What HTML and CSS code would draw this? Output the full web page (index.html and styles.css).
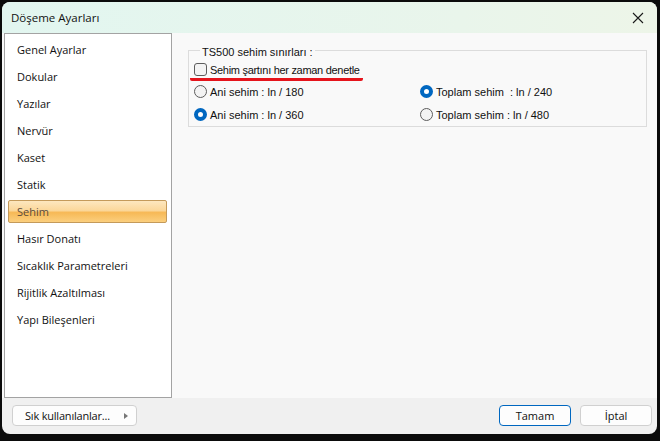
FILE: index.html
```html
<!DOCTYPE html>
<html lang="tr">
<head>
<meta charset="utf-8">
<title>Döşeme Ayarları</title>
<link rel="stylesheet" href="styles.css">
</head>
<body>
<div class="window">
  <div class="titlebar">
    <span class="title">Döşeme Ayarları</span>
    <svg class="close" width="12" height="12" viewBox="0 0 12 12"><path d="M1 1 L11 11 M11 1 L1 11" stroke="#1a1a1a" stroke-width="1.1" fill="none"/></svg>
  </div>
  <div class="main">
    <ul class="nav">
      <li class="nav-item">Genel Ayarlar</li>
      <li class="nav-item">Dokular</li>
      <li class="nav-item">Yazılar</li>
      <li class="nav-item">Nervür</li>
      <li class="nav-item">Kaset</li>
      <li class="nav-item">Statik</li>
      <li class="nav-item selected">Sehim</li>
      <li class="nav-item">Hasır Donatı</li>
      <li class="nav-item">Sıcaklık Parametreleri</li>
      <li class="nav-item">Rijitlik Azaltılması</li>
      <li class="nav-item">Yapı Bileşenleri</li>
    </ul>
    <div class="panel">
      <fieldset class="group">
        <legend class="legend">TS500 sehim sınırları :</legend>
        <div class="check-row">
          <span class="checkbox"></span>
          <span class="label check-label">Sehim şartını her zaman denetle</span>
        </div>
        <div class="radio-grid">
          <div class="opt"><span class="radio"></span><span class="label">Ani sehim : ln / 180</span></div>
          <div class="opt"><span class="radio on"></span><span class="label">Toplam sehim &nbsp;: ln / 240</span></div>
          <div class="opt"><span class="radio on"></span><span class="label">Ani sehim : ln / 360</span></div>
          <div class="opt"><span class="radio"></span><span class="label">Toplam sehim : ln / 480</span></div>
        </div>
      </fieldset>
    </div>
  </div>
  <div class="footer">
    <button class="btn fav"><span>Sık kullanılanlar...</span><span class="tri"></span></button>
    <div class="actions">
      <button class="btn primary">Tamam</button>
      <button class="btn">İptal</button>
    </div>
  </div>
</div>
</body>
</html>
```
FILE: styles.css
```css
* { box-sizing: border-box; }
html, body { margin: 0; padding: 0; }
body {
  background: #0b0b0b;
  width: 660px;
  height: 441px;
  overflow: hidden;
  font-family: "Open Sans", "Noto Sans", sans-serif;
}
.window {
  margin: 2px 0 0 2px;
  width: 655px;
  height: 432px;
  border-radius: 8px;
  overflow: hidden;
  background: #f0f0f0;
  display: flex;
  flex-direction: column;
}
.titlebar {
  height: 31px;
  flex: none;
  display: flex;
  align-items: center;
  justify-content: space-between;
  padding: 0 13px 0 9px;
  background: linear-gradient(to right, #e2f6f0, #e9f5eb 70%, #edf5e8);
}
.title {
  font-size: 11.5px;
  color: #111;
}
.close { display: block; }
.main {
  flex: none;
  height: 365px;
  display: flex;
  background: #f9f9f9;
}
.nav {
  list-style: none;
  margin: 0 0 0 2px;
  padding: 4px 0 0 0;
  width: 168px;
  background: #ffffff;
  border: 1px solid #a3a3a3;
}
.nav-item {
  height: 23px;
  margin: 0 4px 4px 3px;
  padding-left: 8px;
  line-height: 22px;
  font-size: 11px;
  color: #111;
  white-space: nowrap;
  border: 1px solid transparent;
}
.nav-item.selected {
  border-color: #c49a5a;
  border-radius: 2px;
  color: #5a4a3a;
  background: linear-gradient(to bottom, #fde7bf 0%, #fbd79a 45%, #f7b956 55%, #fbcf7e 100%);
}
.panel {
  flex: 1;
  padding: 10px 10px 0 16px;
}
.group {
  margin: 0;
  padding: 0 0 4px 5px;
  border: 1px solid #dcdcdc;
  height: 84px;
  font-family: "Liberation Sans", Arial, sans-serif;
  font-size: 11px;
  color: #111;
}
.legend {
  margin-left: 6px;
  padding: 3px 2px 0 2px;
  font-size: 11px;
}
.label { white-space: nowrap; }
.check-label { letter-spacing: -0.3px; }
.check-row {
  display: flex;
  align-items: center;
  height: 20px;
  margin-top: 3px;
  width: 173px;
  margin-left: -4px;
  padding-left: 4px;
  border-bottom: 3px solid #e5141c;
  border-radius: 0 0 2px 2px;
}
.checkbox {
  flex: none;
  width: 13px;
  height: 13px;
  border: 1px solid #5d5d5d;
  border-radius: 3px;
  background: #f3f3f3;
  margin-right: 3px;
}
.radio-grid {
  display: grid;
  grid-template-columns: 226px 1fr;
  grid-auto-rows: 23px;
  margin-top: -1px;
}
.opt {
  display: flex;
  align-items: center;
}
.radio {
  flex: none;
  width: 13px;
  height: 13px;
  border-radius: 50%;
  border: 1px solid #5d5d5d;
  background: #f3f3f3;
  margin-right: 3px;
}
.radio.on {
  border: 4px solid #0067c0;
  background: #ffffff;
}
.footer {
  flex: 1;
  display: flex;
  align-items: center;
  justify-content: space-between;
  padding: 0 5px 1px 10px;
}
.actions { display: flex; gap: 9px; }
.btn {
  height: 21px;
  margin: 0;
  font-family: "Open Sans", "Noto Sans", sans-serif;
  font-size: 11px;
  color: #111;
  background: #fdfdfd;
  border: 1px solid #d0d0d0;
  border-radius: 4px;
  width: 72px;
  padding: 0;
  white-space: nowrap;
}
.btn.primary { border-color: #0067c0; }
.btn.fav {
  width: 125px;
  text-align: left;
  padding: 0 8px 0 12px;
  display: flex;
  align-items: center;
  justify-content: space-between;
  letter-spacing: -0.2px;
}
.tri {
  flex: none;
  width: 0;
  height: 0;
  border-top: 3.5px solid transparent;
  border-bottom: 3.5px solid transparent;
  border-left: 4px solid #777;
}
```
